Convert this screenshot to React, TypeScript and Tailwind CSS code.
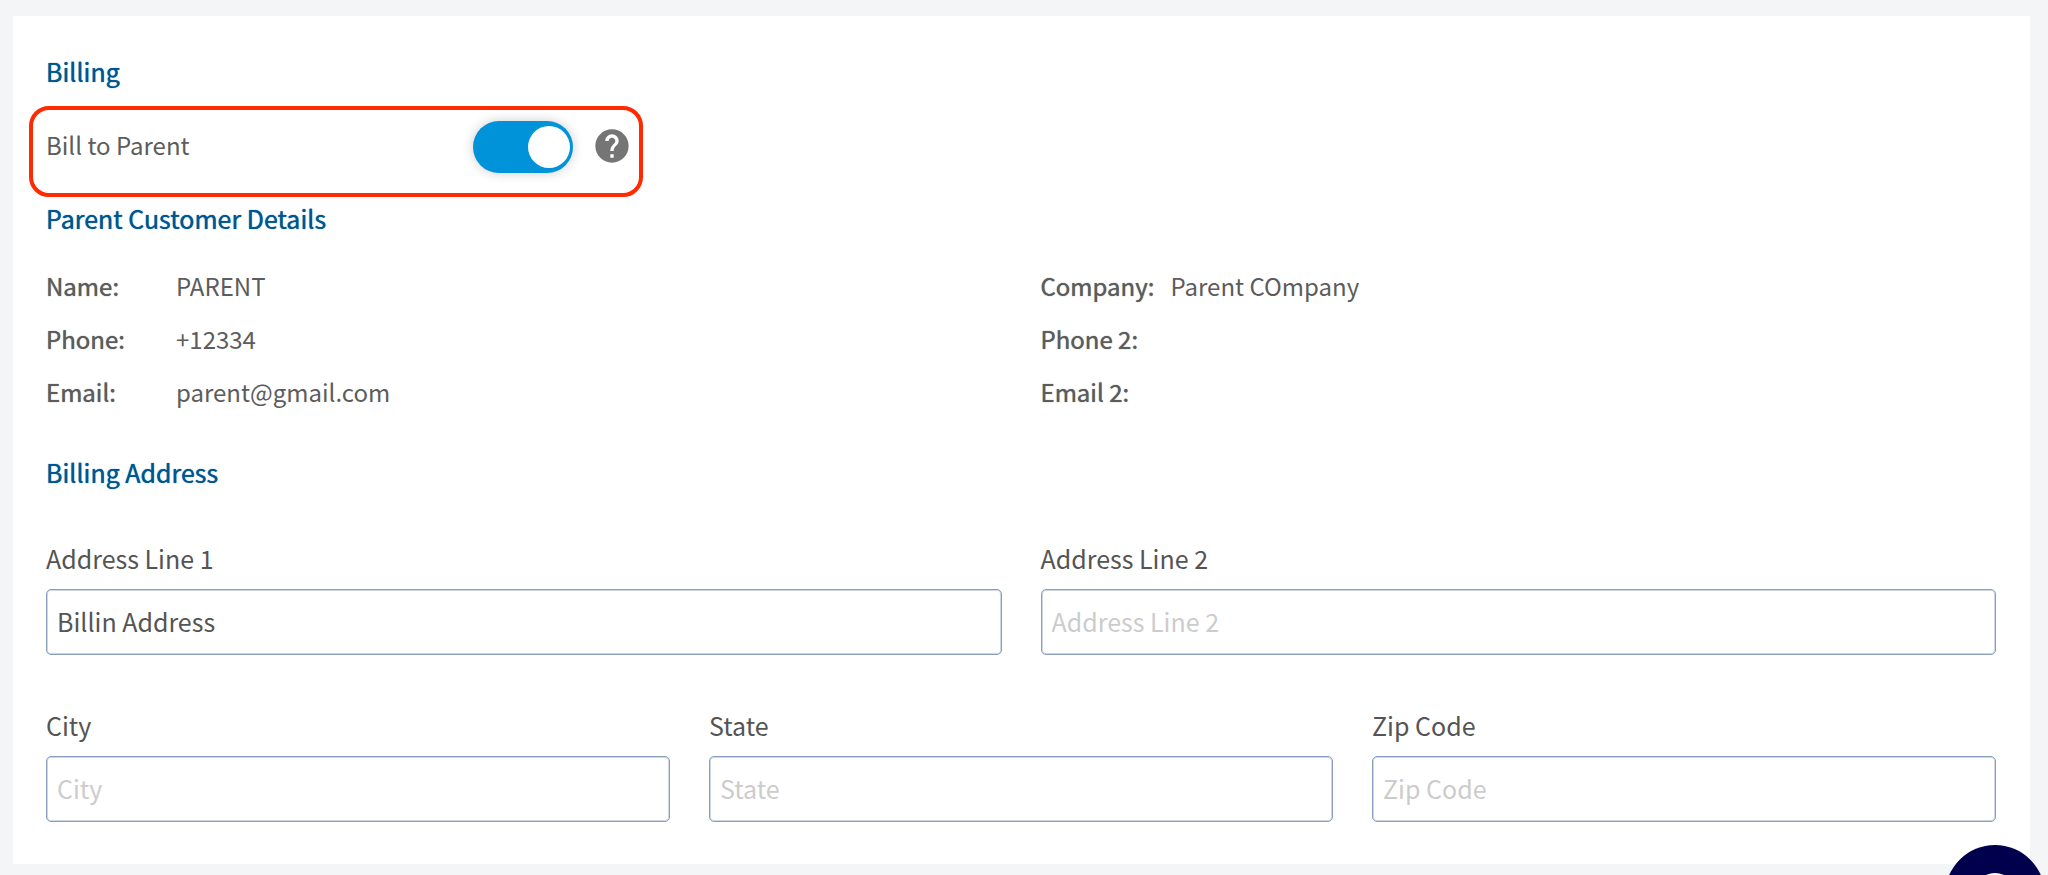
import { useState } from "react";

const LEFT_DETAILS = [
  { label: "Name:", value: "PARENT" },
  { label: "Phone:", value: "+12334" },
  { label: "Email:", value: "parent@gmail.com" },
];

const RIGHT_DETAILS = [
  { label: "Company:", value: "Parent COmpany" },
  { label: "Phone 2:", value: "" },
  { label: "Email 2:", value: "" },
];

function SectionTitle({ children }: { children: string }) {
  return (
    <h2 className="text-[25px] leading-8 text-[#00568f] [text-shadow:0_0_1px_currentColor]">
      {children}
    </h2>
  );
}

function DetailList({ items }: { items: { label: string; value: string }[] }) {
  return (
    <dl className="text-2xl leading-[53px]">
      {items.map((item) => (
        <div key={item.label} className="flex">
          <dt className="w-[130px] shrink-0 whitespace-nowrap [text-shadow:0_0_1px_currentColor]">
            {item.label}
          </dt>
          <dd>{item.value}</dd>
        </div>
      ))}
    </dl>
  );
}

function Field({ id, label, initial = "" }: { id: string; label: string; initial?: string }) {
  const [value, setValue] = useState(initial);

  return (
    <div className="flex min-w-0 flex-col gap-[15px]">
      <label htmlFor={id} className="text-[25px] leading-8 text-[#545454]">
        {label}
      </label>
      <input
        id={id}
        type="text"
        value={value}
        placeholder={label}
        onChange={(e) => setValue(e.target.value)}
        className="h-[66px] w-full rounded-[5px] border border-[#8a9fbb] bg-white px-[10px] pb-0.5 text-[25px] text-[#545454] inset-shadow-[0_0_0_1px_#cdd6e2] placeholder:text-[#cccccc] focus:border-[#0093da] focus:outline-none"
      />
    </div>
  );
}

export default function App() {
  const [billToParent, setBillToParent] = useState(true);

  return (
    <div className="min-h-screen overflow-hidden bg-[#f4f5f7] pt-4 pr-[18px] pb-[11px] pl-[13px] font-['Noto_Sans_CJK_SC',sans-serif] text-[#5c5c5c]">
      <main className="bg-white pt-[39px] pr-[34px] pb-[42px] pl-[33px]">
        <SectionTitle>Billing</SectionTitle>

        <div className="relative mt-[34px] flex h-[52px] w-fit items-center">
          <label htmlFor="bill-to-parent" className="w-[427px] pb-1 text-2xl leading-8">
            Bill to Parent
          </label>
          <span className="relative flex">
            <input
              id="bill-to-parent"
              type="checkbox"
              role="switch"
              checked={billToParent}
              onChange={(e) => setBillToParent(e.target.checked)}
              className="peer h-[52px] w-[100px] cursor-pointer appearance-none rounded-full bg-[#c4c4c4] shadow-[0_0_12px_rgba(0,0,0,0.2)] checked:bg-[#0093da]"
            />
            <span className="pointer-events-none absolute top-[5px] left-[3px] size-[42px] rounded-full bg-white peer-checked:left-[55px]" />
          </span>
          <button type="button" aria-label="Help" className="ml-[19px] cursor-pointer pb-0.5">
            <svg viewBox="0 0 24 24" className="size-10 fill-[#757575]">
              <path d="M12 2C6.48 2 2 6.48 2 12s4.48 10 10 10 10-4.48 10-10S17.52 2 12 2zm1 17h-2v-2h2v2zm2.07-7.75l-.9.92C13.45 12.9 13 13.5 13 15h-2v-.5c0-1.1.45-2.1 1.17-2.83l1.24-1.26c.37-.36.59-.86.59-1.41 0-1.1-.9-2-2-2s-2 .9-2 2H8c0-2.21 1.79-4 4-4s4 1.79 4 4c0 .88-.36 1.68-.93 2.25z" />
            </svg>
          </button>
          {/* highlight around the toggle row */}
          <div className="pointer-events-none absolute -top-[15px] -right-[11px] -bottom-6 -left-[17px] rounded-[20px] border-4 border-[#ff2a00]" />
        </div>

        <div className="mt-[29px]">
          <SectionTitle>Parent Customer Details</SectionTitle>
        </div>
        <div className="mt-[25px] grid grid-cols-2 gap-x-[39px]">
          <DetailList items={LEFT_DETAILS} />
          <DetailList items={RIGHT_DETAILS} />
        </div>

        <div className="mt-[38px]">
          <SectionTitle>Billing Address</SectionTitle>
        </div>
        <div className="mt-[54px] grid grid-cols-2 gap-x-[39px]">
          <Field id="address-1" label="Address Line 1" initial="Billin Address" />
          <Field id="address-2" label="Address Line 2" />
        </div>
        <div className="mt-[54px] grid grid-cols-3 gap-x-[39px]">
          <Field id="city" label="City" />
          <Field id="state" label="State" />
          <Field id="zip" label="Zip Code" />
        </div>
      </main>

      <button
        type="button"
        aria-label="Open chat"
        className="fixed right-[3px] -bottom-[70px] flex size-[100px] cursor-pointer items-start justify-center rounded-full bg-[#00004d] pt-7"
      >
        <span className="size-11 rounded-full bg-white" />
      </button>
    </div>
  );
}
